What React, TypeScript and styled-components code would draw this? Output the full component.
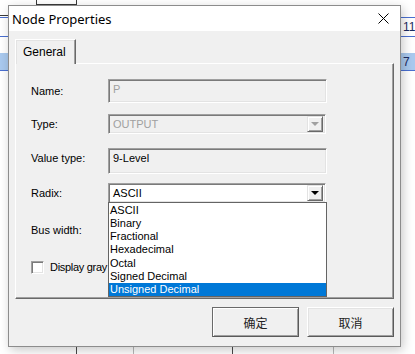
import React from 'react'
import styled, { createGlobalStyle } from 'styled-components'

const GlobalStyle = createGlobalStyle`
    html, body {
        margin: 0;
        padding: 0;
        background: #ffffff;
    }
    body {
        font-family: 'Liberation Sans', Arial, sans-serif;
        font-size: 11px;
        color: #000000;
    }
`

const Desktop = styled.div`
    position: relative;
    width: 415px;
    height: 354px;
    overflow: hidden;
    background: #ffffff;
`

/* waveform editor behind the dialog */
const Canvas = styled.div`
    display: flex;
    flex-direction: column;
    height: 100%;
`

const TopCell = styled.div`
    margin-left: 36px;
    width: 39px;
    height: 4px;
    border: 1px solid #3a3a3a;
    border-top: none;
`

const GridLine = styled.div`
    margin-top: 10px;
    height: 1px;
    width: 20px;
    background: #3a3a3a;
`

const ValueRow = styled.div<{ $band?: boolean; $top: number }>`
    margin-top: ${p => p.$top}px;
    height: ${p => (p.$band ? 16 : 18)}px;
    display: flex;
    justify-content: flex-end;
    align-items: center;
    background: ${p => (p.$band ? '#a9c9ee' : 'transparent')};
    border-top: 1px solid ${p => (p.$band ? '#a9c9ee' : '#4a6fd0')};
    border-bottom: 1px solid #4a6fd0;
`

const ValueCell = styled.div<{ $band?: boolean }>`
    width: 12px;
    height: 100%;
    padding-left: 2px;
    font-size: 12px;
    line-height: ${p => (p.$band ? 16 : 18)}px;
    color: #1a2a60;
    border-left: 1px solid #4a6fd0;
    background: ${p => (p.$band ? '#a9c9ee' : '#ffffff')};
`

const Ticks = styled.div`
    margin-top: auto;
    height: 8px;
    display: flex;
`

const Tick = styled.div<{ $left: number; $faint?: boolean }>`
    margin-left: ${p => p.$left}px;
    width: 1px;
    height: 100%;
    background: ${p => (p.$faint ? '#b8b8b8' : '#4a4a4a')};
`

/* dialog window */
const Dialog = styled.div`
    position: absolute;
    left: 8px;
    top: 5px;
    width: 393px;
    box-sizing: border-box;
    border: 1px solid #8c8c8c;
    background: #f0f0f0;
    box-shadow: 2px 3px 10px rgba(0, 0, 0, 0.22);
    display: flex;
    flex-direction: column;
    z-index: 2;
`

const TitleBar = styled.div`
    height: 25px;
    background: #ffffff;
    display: flex;
    align-items: center;
    padding-left: 3px;
`

const Title = styled.div`
    flex: 1;
    font-family: 'Noto Sans', 'Open Sans', sans-serif;
    font-size: 13px;
    color: #000000;
`

const CloseButton = styled.div`
    width: 34px;
    height: 25px;
    display: flex;
    align-items: center;
    justify-content: center;
`

const Body = styled.div`
    padding: 8px 6px 9px 6px;
    display: flex;
    flex-direction: column;
`

const TabStrip = styled.div`
    display: flex;
    height: 25px;
    margin-bottom: -1px;
    position: relative;
    z-index: 1;
`

const Tab = styled.div`
    width: 61px;
    box-sizing: border-box;
    height: 25px;
    padding: 5px 0 0 7px;
    font-size: 12px;
    background: #f0f0f0;
    border-top: 1px solid #ffffff;
    border-left: 1px solid #ffffff;
    border-right: 1px solid #696969;
    box-shadow: inset -1px 0 0 #a0a0a0, inset 1px 1px 0 #e3e3e3;
`

const Panel = styled.div`
    height: 236px;
    box-sizing: border-box;
    border-top: 1px solid #ffffff;
    border-left: 1px solid #ffffff;
    border-right: 1px solid #696969;
    border-bottom: 1px solid #696969;
    box-shadow: inset -1px -1px 0 #a0a0a0;
    padding: 15px 0 0 15px;
    display: flex;
    flex-direction: column;
`

const Row = styled.div<{ $top: number; $h: number; $alignTop?: boolean }>`
    margin-top: ${p => p.$top}px;
    height: ${p => p.$h}px;
    display: flex;
    align-items: ${p => (p.$alignTop ? 'flex-start' : 'center')};
`

const Label = styled.div<{ $pad?: number }>`
    width: 77px;
    padding-top: ${p => p.$pad ?? 0}px;
    color: #000000;
`

const sunken = `
    box-sizing: border-box;
    border-top: 1px solid #a0a0a0;
    border-left: 1px solid #a0a0a0;
    border-right: 1px solid #ffffff;
    border-bottom: 1px solid #ffffff;
    box-shadow: inset 1px 1px 0 #7a7a7a, inset -1px -1px 0 #e3e3e3;
`

const TextBox = styled.div<{ $disabled?: boolean }>`
    ${sunken}
    width: 219px;
    height: 100%;
    padding: 3px 0 0 4px;
    background: #f0f0f0;
    color: ${p => (p.$disabled ? '#a0a0a0' : '#000000')};
`

const Combo = styled.div<{ $disabled?: boolean }>`
    ${sunken}
    position: relative;
    width: 218px;
    height: 100%;
    display: flex;
    align-items: center;
    padding: 2px;
    background: ${p => (p.$disabled ? '#f0f0f0' : '#ffffff')};
    color: ${p => (p.$disabled ? '#a0a0a0' : '#000000')};
`

const ComboText = styled.div`
    flex: 1;
    padding-left: 2px;
`

const ArrowButton = styled.div`
    width: 16px;
    height: 16px;
    box-sizing: border-box;
    background: #f0f0f0;
    border-top: 1px solid #e3e3e3;
    border-left: 1px solid #e3e3e3;
    border-right: 1px solid #696969;
    border-bottom: 1px solid #696969;
    box-shadow: inset 1px 1px 0 #ffffff, inset -1px -1px 0 #a0a0a0;
    display: flex;
    align-items: center;
    justify-content: center;
`

const Arrow = styled.div<{ $disabled?: boolean }>`
    width: 0;
    height: 0;
    border-left: 4px solid transparent;
    border-right: 4px solid transparent;
    border-top: 4px solid ${p => (p.$disabled ? '#a0a0a0' : '#000000')};
`

const DropList = styled.div`
    position: absolute;
    top: 100%;
    left: -1px;
    width: 219px;
    height: 95px;
    box-sizing: border-box;
    border: 1px solid #646464;
    background: #ffffff;
    display: flex;
    flex-direction: column;
    z-index: 5;
`

const ListItem = styled.div<{ $selected?: boolean }>`
    flex: 1;
    display: flex;
    align-items: center;
    padding-left: 1px;
    background: ${p => (p.$selected ? '#0078d7' : 'transparent')};
    color: ${p => (p.$selected ? '#ffffff' : '#000000')};
`

const CheckBox = styled.div`
    ${sunken}
    width: 13px;
    height: 13px;
    background: #ffffff;
    margin-right: 6px;
`

const CheckLabel = styled.span`
    letter-spacing: -0.3px;
    white-space: nowrap;
`

const ButtonRow = styled.div`
    margin-top: 8px;
    display: flex;
    justify-content: flex-end;
    gap: 8px;
`

const Button = styled.div<{ $default?: boolean }>`
    width: 87px;
    height: 30px;
    box-sizing: border-box;
    display: flex;
    align-items: center;
    justify-content: center;
    font-family: 'Noto Sans CJK SC', 'Noto Sans', sans-serif;
    font-size: 12px;
    color: #222222;
    background: #f0f0f0;
    border-top: 1px solid ${p => (p.$default ? '#6a6a6a' : '#ffffff')};
    border-left: 1px solid ${p => (p.$default ? '#6a6a6a' : '#ffffff')};
    border-right: 1px solid #5a5a5a;
    border-bottom: 1px solid #5a5a5a;
    box-shadow: ${p =>
        p.$default
            ? 'inset 1px 1px 0 #ffffff, inset -1px -1px 0 #a0a0a0'
            : 'inset 1px 1px 0 #e3e3e3, inset -1px -1px 0 #a0a0a0'};
`

const radixOptions = ['ASCII', 'Binary', 'Fractional', 'Hexadecimal', 'Octal', 'Signed Decimal', 'Unsigned Decimal']

const App = () => {
    return (
        <Desktop>
            <GlobalStyle />
            <Canvas>
                <TopCell />
                <GridLine />
                <ValueRow $top={1}>
                    <ValueCell>11</ValueCell>
                </ValueRow>
                <ValueRow $top={16} $band>
                    <ValueCell $band>7</ValueCell>
                </ValueRow>
                <Ticks>
                    <Tick $left={76} />
                    <Tick $left={56} $faint />
                    <Tick $left={98} />
                    <Tick $left={100} $faint />
                </Ticks>
            </Canvas>

            <Dialog>
                <TitleBar>
                    <Title>Node Properties</Title>
                    <CloseButton>
                        <svg width="11" height="11" viewBox="0 0 11 11">
                            <path d="M0.5 0.5 L10.5 10.5 M10.5 0.5 L0.5 10.5" stroke="#000" strokeWidth="1" fill="none" />
                        </svg>
                    </CloseButton>
                </TitleBar>
                <Body>
                    <TabStrip>
                        <Tab>General</Tab>
                    </TabStrip>
                    <Panel>
                        <Row $top={0} $h={24}>
                            <Label>Name:</Label>
                            <TextBox $disabled>P</TextBox>
                        </Row>
                        <Row $top={11} $h={20}>
                            <Label>Type:</Label>
                            <Combo $disabled>
                                <ComboText>OUTPUT</ComboText>
                                <ArrowButton><Arrow $disabled /></ArrowButton>
                            </Combo>
                        </Row>
                        <Row $top={14} $h={26} $alignTop>
                            <Label $pad={4}>Value type:</Label>
                            <TextBox>9-Level</TextBox>
                        </Row>
                        <Row $top={9} $h={20}>
                            <Label>Radix:</Label>
                            <Combo>
                                <ComboText>ASCII</ComboText>
                                <ArrowButton><Arrow /></ArrowButton>
                                <DropList>
                                    {radixOptions.map((o, i) => (
                                        <ListItem key={o} $selected={i === radixOptions.length - 1}>{o}</ListItem>
                                    ))}
                                </DropList>
                            </Combo>
                        </Row>
                        <Row $top={16} $h={22}>
                            <Label>Bus width:</Label>
                            <TextBox />
                        </Row>
                        <Row $top={19} $h={14}>
                            <CheckBox />
                            <CheckLabel>Display gray</CheckLabel>
                        </Row>
                    </Panel>
                    <ButtonRow>
                        <Button $default>确定</Button>
                        <Button>取消</Button>
                    </ButtonRow>
                </Body>
            </Dialog>
        </Desktop>
    )
}

export default App
